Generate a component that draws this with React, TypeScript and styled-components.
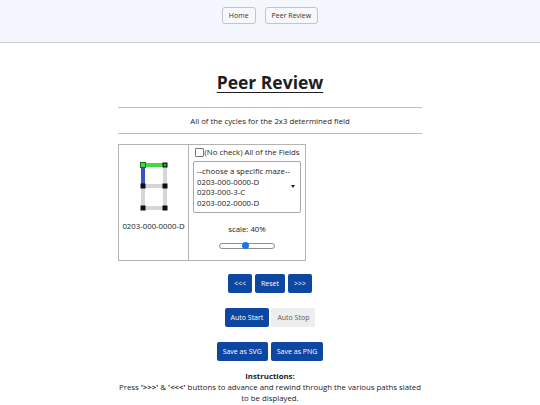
import React from 'react';
import { styled, createGlobalStyle } from 'styled-components';

const GlobalStyle = createGlobalStyle`
  html, body {
    margin: 0;
    padding: 0;
    background: #ffffff;
    font-family: "Open Sans", "Noto Sans", sans-serif;
    color: #222222;
  }
`;

const textSize = '7.8px';

const Header = styled.header`
  display: flex;
  justify-content: center;
  align-items: flex-start;
  gap: 9px;
  height: 43px;
  padding-top: 7px;
  box-sizing: border-box;
  background: #f5f7fe;
  border-bottom: 1px solid #c9cad3;
`;

const NavButton = styled.button`
  height: 17px;
  padding: 0 6px;
  font-family: inherit;
  font-size: 7px;
  color: #333333;
  background: #f7f8fc;
  border: 1px solid #c2c4cc;
  border-radius: 3px;
`;

const Main = styled.main`
  display: flex;
  flex-flow: column nowrap;
  align-items: center;
  width: 304px;
  margin: 0 auto;
`;

const Title = styled.h1`
  margin: 27px 0 0;
  font-size: 17.5px;
  font-weight: 700;
  text-decoration: underline;
  text-underline-offset: 3px;
  color: #1e1e1e;
`;

const Rule = styled.hr<{ $top?: number }>`
  width: 100%;
  margin: ${({ $top = 0 }) => $top}px 0 0;
  border: none;
  border-top: 1px solid #bdbdbd;
`;

const SubText = styled.p`
  margin: 0;
  padding: 7px 0 6px;
  font-size: ${textSize};
  line-height: 12px;
  color: #222222;
`;

const FieldTable = styled.div`
  align-self: flex-start;
  display: grid;
  grid-template-columns: 70px 116px;
  margin-top: 10px;
  border: 1px solid #b3b3b3;
`;

const PreviewCell = styled.div`
  display: flex;
  flex-flow: column nowrap;
  align-items: center;
  justify-content: flex-start;
  gap: 9px;
  height: 115px;
  padding-top: 17px;
  box-sizing: border-box;
  border-right: 1px solid #b3b3b3;
`;

const SmallText = styled.span`
  font-size: ${textSize};
  color: #222222;
`;

const ControlCell = styled.div`
  display: flex;
  flex-flow: column nowrap;
  align-items: center;
  padding: 2px 4px 0;
`;

const CheckRow = styled.label`
  display: flex;
  align-items: center;
  gap: 1px;
  font-size: ${textSize};
  line-height: 11px;
  color: #222222;
`;

const CheckBox = styled.span`
  width: 7px;
  height: 7px;
  border: 1px solid #767676;
  border-radius: 1px;
  background: #ffffff;
`;

const ListBox = styled.div`
  position: relative;
  width: 108px;
  height: 52px;
  margin-top: 3px;
  box-sizing: border-box;
  padding: 4px 3px 0;
  overflow: hidden;
  border: 1px solid #a8a8a8;
  border-radius: 2px;
  font-size: ${textSize};
  line-height: 10.7px;
  color: #222222;
`;

const ListOption = styled.div`
  white-space: nowrap;
  color: #222222;
`;

const ListArrow = styled.span`
  position: absolute;
  right: 5px;
  top: 23px;
  width: 0;
  height: 0;
  border-left: 2px solid transparent;
  border-right: 2px solid transparent;
  border-top: 3px solid #222222;
`;

const ScaleText = styled.span`
  margin-top: 11px;
  font-size: ${textSize};
  line-height: 11px;
  color: #222222;
`;

const Slider = styled.div`
  position: relative;
  width: 56px;
  height: 6px;
  margin-top: 8px;
  box-sizing: border-box;
  border: 1px solid #8f8f8f;
  border-radius: 4px;
`;

const SliderThumb = styled.span`
  position: absolute;
  top: -2px;
  width: 7px;
  height: 7px;
  border-radius: 50%;
  background: #1a73e8;
`;

const ButtonRow = styled.div<{ $top: number; $gap?: number }>`
  display: flex;
  gap: ${({ $gap = 3 }) => $gap}px;
  margin-top: ${({ $top }) => $top}px;
`;

const ActionButton = styled.button<{ $muted?: boolean }>`
  height: 19px;
  padding: 0 6px;
  font-family: inherit;
  font-size: 7px;
  color: ${({ $muted }) => ($muted ? '#5a5a5a' : '#ffffff')};
  background: ${({ $muted }) => ($muted ? '#eeeeee' : '#0d47a1')};
  border: none;
  border-radius: 2px;
`;

const Instructions = styled.div`
  width: 310px;
  margin-top: 10px;
  text-align: center;
  font-size: ${textSize};
  line-height: 11px;
  color: #222222;
`;

const InstructionsTitle = styled.div`
  font-weight: 700;
`;

function Maze() {
  const grey = '#d6d6d6';
  return (
    <svg width="28" height="50" viewBox="0 0 28 50">
      <line x1="3" y1="24" x2="3" y2="46" stroke={grey} strokeWidth="4" />
      <line x1="25" y1="3" x2="25" y2="46" stroke={grey} strokeWidth="4" />
      <line x1="3" y1="24" x2="25" y2="24" stroke={grey} strokeWidth="4" />
      <line x1="3" y1="46" x2="25" y2="46" stroke={grey} strokeWidth="4" />
      <line x1="3" y1="3" x2="25" y2="3" stroke="#45d845" strokeWidth="4" />
      <line x1="3" y1="3" x2="3" y2="24" stroke="#3b4fd0" strokeWidth="4" />
      <rect x="0.5" y="0.5" width="5" height="5" fill="#3fd63f" stroke="#1a6e1a" />
      <rect x="22.5" y="0.5" width="5" height="5" fill="#111111" />
      <path d="M25 1.5 V4.5 M23.5 3 H26.5" stroke="#45d845" strokeWidth="1" />
      <rect x="0.5" y="21.5" width="5" height="5" fill="#111111" />
      <rect x="22.5" y="21.5" width="5" height="5" fill="#111111" />
      <rect x="0.5" y="43.5" width="5" height="5" fill="#111111" />
      <rect x="22.5" y="43.5" width="5" height="5" fill="#111111" />
    </svg>
  );
}

const mazes = [
  '--choose a specific maze--',
  '0203-000-0000-D',
  '0203-000-3-C',
  '0203-002-0000-D',
  '0203-002-3-C',
];

export default function App(): React.ReactNode {
  return (
    <>
      <GlobalStyle />
      <Header>
        <NavButton>Home</NavButton>
        <NavButton>Peer Review</NavButton>
      </Header>
      <Main>
        <Title>Peer Review</Title>
        <Rule $top={13} />
        <SubText>All of the cycles for the 2x3 determined field</SubText>
        <Rule />
        <FieldTable>
          <PreviewCell>
            <Maze />
            <SmallText>0203-000-0000-D</SmallText>
          </PreviewCell>
          <ControlCell>
            <CheckRow>
              <CheckBox />
              (No check) All of the Fields
            </CheckRow>
            <ListBox>
              {mazes.map((m) => (
                <ListOption key={m}>{m}</ListOption>
              ))}
              <ListArrow />
            </ListBox>
            <ScaleText>scale: 40%</ScaleText>
            <Slider>
              <SliderThumb style={{ left: '40%' }} />
            </Slider>
          </ControlCell>
        </FieldTable>
        <ButtonRow $top={13}>
          <ActionButton>&lt;&lt;&lt;</ActionButton>
          <ActionButton>Reset</ActionButton>
          <ActionButton>&gt;&gt;&gt;</ActionButton>
        </ButtonRow>
        <ButtonRow $top={15} $gap={2}>
          <ActionButton>Auto Start</ActionButton>
          <ActionButton $muted>Auto Stop</ActionButton>
        </ButtonRow>
        <ButtonRow $top={15}>
          <ActionButton>Save as SVG</ActionButton>
          <ActionButton>Save as PNG</ActionButton>
        </ButtonRow>
        <Instructions>
          <InstructionsTitle>Instructions:</InstructionsTitle>
          Press <b>'&gt;&gt;&gt;'</b> &amp; <b>'&lt;&lt;&lt;'</b> buttons to advance and rewind
          through the various paths slated to be displayed.
        </Instructions>
      </Main>
    </>
  );
}
